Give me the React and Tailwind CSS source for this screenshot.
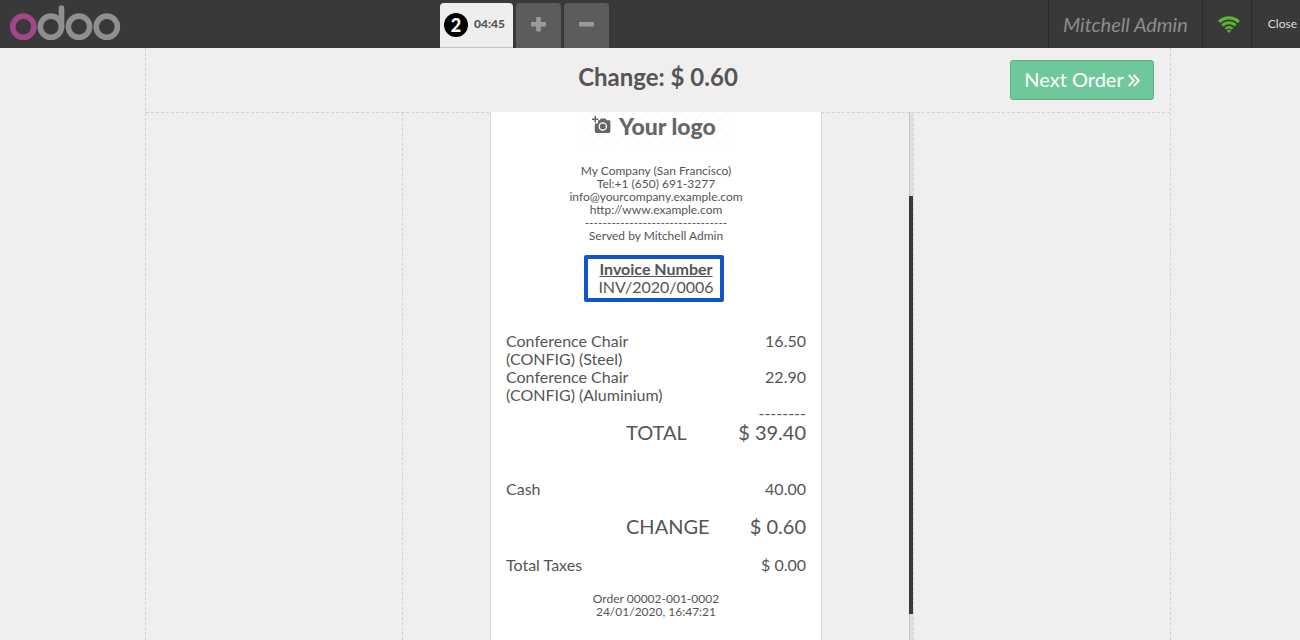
import React from "react";

const company = [
  "My Company (San Francisco)",
  "Tel:+1 (650) 691-3277",
  "info@yourcompany.example.com",
  "http://www.example.com",
  "--------------------------------",
  "Served by Mitchell Admin",
];

const lines = [
  { name: "Conference Chair (CONFIG) (Steel)", price: "16.50" },
  { name: "Conference Chair (CONFIG) (Aluminium)", price: "22.90" },
];

function OdooLogo() {
  return (
    <svg width="112" height="38" viewBox="9 4 112 38" fill="none" strokeWidth="5.6" role="img" aria-label="odoo">
      <circle cx="50.9" cy="26.7" r="10.6" stroke="#8f8f8f" />
      <path d="M61.5 26.7V8" stroke="#8f8f8f" strokeLinecap="round" />
      <circle cx="79" cy="26.7" r="10.6" stroke="#8f8f8f" />
      <circle cx="106.8" cy="26.7" r="10.6" stroke="#8f8f8f" />
      <circle cx="23.4" cy="26.7" r="10.6" stroke="#a24689" />
    </svg>
  );
}

function WifiIcon() {
  return (
    <svg width="22" height="17" viewBox="0 0 22 17" fill="none" stroke="#5cb531" aria-hidden="true">
      <path d="M1.2 6a13.9 13.9 0 0 1 19.6 0" strokeWidth="3.2" />
      <path d="M4.4 9.5a9.4 9.4 0 0 1 13.2 0" strokeWidth="3" />
      <path d="M7.5 12.7a5 5 0 0 1 7 0" strokeWidth="2.7" />
      <path d="M11 17l-2-2.2a2.8 2.8 0 0 1 4 0z" fill="#5cb531" stroke="none" />
    </svg>
  );
}

function TopBar() {
  return (
    <header className="flex h-12 shrink-0 bg-[#393939] text-[#999]">
      <div className="flex w-[440px] shrink-0 items-start pt-1 pl-[9px]">
        <OdooLogo />
      </div>
      <nav className="flex grow items-end gap-[3px]" aria-label="Orders">
        <button className="flex h-[45px] w-[73px] items-center gap-1.5 rounded-t border-b border-[#c4c4c4] bg-[#eee] pl-1 text-[#555]">
          <span className="flex size-6 items-center justify-center rounded-full bg-black text-lg font-black text-white">2</span>
          <span className="pb-0.5 text-xs font-black">04:45</span>
        </button>
        <button aria-label="New order" className="flex h-[45px] w-[45px] items-center justify-center rounded-t bg-[#5c5c5c] pb-0.5">
          <svg width="15" height="15" viewBox="0 0 15 15" fill="#9a9a9a" aria-hidden="true">
            <rect x="5.2" width="4.6" height="14.5" rx="1" />
            <rect y="5" width="15" height="4.4" rx="1" />
          </svg>
        </button>
        <button aria-label="Delete order" className="flex h-[45px] w-[45px] items-center justify-center rounded-t bg-[#5c5c5c] pb-0.5">
          <svg width="15" height="15" viewBox="0 0 15 15" fill="#9a9a9a" aria-hidden="true">
            <rect y="5" width="15" height="4.4" rx="1" />
          </svg>
        </button>
      </nav>
      <div className="flex shrink-0 items-center border-l border-[#292929] px-3.5 text-xl text-[#8c8c8c] italic">Mitchell Admin</div>
      <div className="flex w-[49px] shrink-0 items-center justify-center border-l border-[#292929] pl-1">
        <WifiIcon />
      </div>
      <button className="shrink-0 border-l border-[#292929] pl-4 pr-[3px] text-xs text-[#ddd]">Close</button>
    </header>
  );
}

function CompanyLogo() {
  return (
    <div className="mx-auto flex h-[34px] w-[150px] items-start gap-2 bg-[repeating-linear-gradient(135deg,#ffffff_0px,#ffffff_6px,#fbfbfb_6px,#fbfbfb_8px)] pl-[11px] text-[#666]">
      <svg className="mt-1" width="19" height="18" viewBox="0 0 19 18" aria-hidden="true">
        <path fill="#666" d="M6 4.2h1.6L9 2.5h4.4l1.4 1.7H17a1.4 1.4 0 0 1 1.4 1.4v10A1.4 1.4 0 0 1 17 17H4.2a1.4 1.4 0 0 1-1.4-1.4V7.4H6z" />
        <path stroke="#666" strokeWidth="1.5" d="M3.2 0v6.4M0 3.2h6.4" />
        <circle cx="10.8" cy="10.4" r="3.6" fill="none" stroke="#fff" strokeWidth="1.3" />
      </svg>
      <span className="text-[23px] leading-7 font-black whitespace-nowrap">Your logo</span>
    </div>
  );
}

function Receipt() {
  return (
    <article className="min-h-full w-[332px] shrink-0 border-x border-[#dcdada] bg-white px-[15px] text-base leading-[18px]">
      <CompanyLogo />
      <div className="mt-[18px] text-center text-xs leading-[13px]">
        {company.map((text) => (
          <p key={text}>{text}</p>
        ))}
      </div>
      <div className="mt-[18px] flex justify-center">
        <div className="relative text-center">
          <p className="font-bold underline">Invoice Number</p>
          <p>INV/2020/0006</p>
          <span className="absolute -top-[5px] -right-2.5 -bottom-1.5 -left-3.5 rounded-[2px] border-4 border-[#1155cc]" />
        </div>
      </div>
      <table className="mt-9 w-full">
        <tbody>
          {lines.map((line) => (
            <tr key={line.name} className="align-top">
              <td className="w-3/5">{line.name}</td>
              <td className="text-right">{line.price}</td>
            </tr>
          ))}
        </tbody>
      </table>
      <p className="text-right">--------</p>
      <div className="ml-[40%] flex justify-between text-xl leading-5">
        <span>TOTAL</span>
        <span>$ 39.40</span>
      </div>
      <div className="mt-[38px] flex justify-between">
        <span>Cash</span>
        <span>40.00</span>
      </div>
      <div className="mt-[18px] ml-[40%] flex justify-between text-xl leading-5">
        <span>CHANGE</span>
        <span>$ 0.60</span>
      </div>
      <div className="mt-5 flex justify-between">
        <span>Total Taxes</span>
        <span>$ 0.00</span>
      </div>
      <div className="mt-[18px] text-center text-xs leading-[13px]">
        <p>Order 00002-001-0002</p>
        <p>24/01/2020, 16:47:21</p>
      </div>
    </article>
  );
}

export default function App() {
  return (
    <div className="flex h-screen flex-col overflow-hidden bg-[#f0eeee] font-[Lato,sans-serif] text-[#555]">
      <TopBar />
      <div className="flex min-h-0 grow justify-center pl-4">
        <main className="flex w-full max-w-[1026px] flex-col border-x border-dashed border-[#d4d2d2]">
          <div className="grid h-16 shrink-0 grid-cols-[1fr_auto_1fr] items-center px-4">
            <h1 className="col-start-2 pb-1.5 text-2xl font-bold">Change: $ 0.60</h1>
            <button className="flex h-10 w-36 items-center justify-center gap-1 justify-self-end rounded-[3px] border border-[#5fae86] bg-[#6ec89b] pb-0.5 text-xl text-white">
              Next Order
              <svg className="mt-0.5" width="12" height="13" viewBox="0 0 12 13" fill="none" stroke="#fff" strokeWidth="1.9" aria-hidden="true">
                <path d="M.8 1l5 5.5-5 5.5M5.8 1l5 5.5-5 5.5" />
              </svg>
            </button>
          </div>
          <div className="flex min-h-0 grow justify-center border-t border-dashed border-[#d4d2d2]">
            <section className="flex w-full max-w-[512px] border-x border-dashed border-[#d4d2d2]" aria-label="Receipt">
              <div className="-mt-px flex min-w-0 grow justify-center overflow-hidden">
                <Receipt />
              </div>
              <div className="-mt-px flex w-1 flex-col border-l border-[#c6c4c4] bg-[#e0dede]" aria-hidden="true">
                <div className="h-[16%]" />
                <div className="-ml-px h-[79%] bg-[#393939]" />
              </div>
            </section>
          </div>
        </main>
      </div>
    </div>
  );
}
